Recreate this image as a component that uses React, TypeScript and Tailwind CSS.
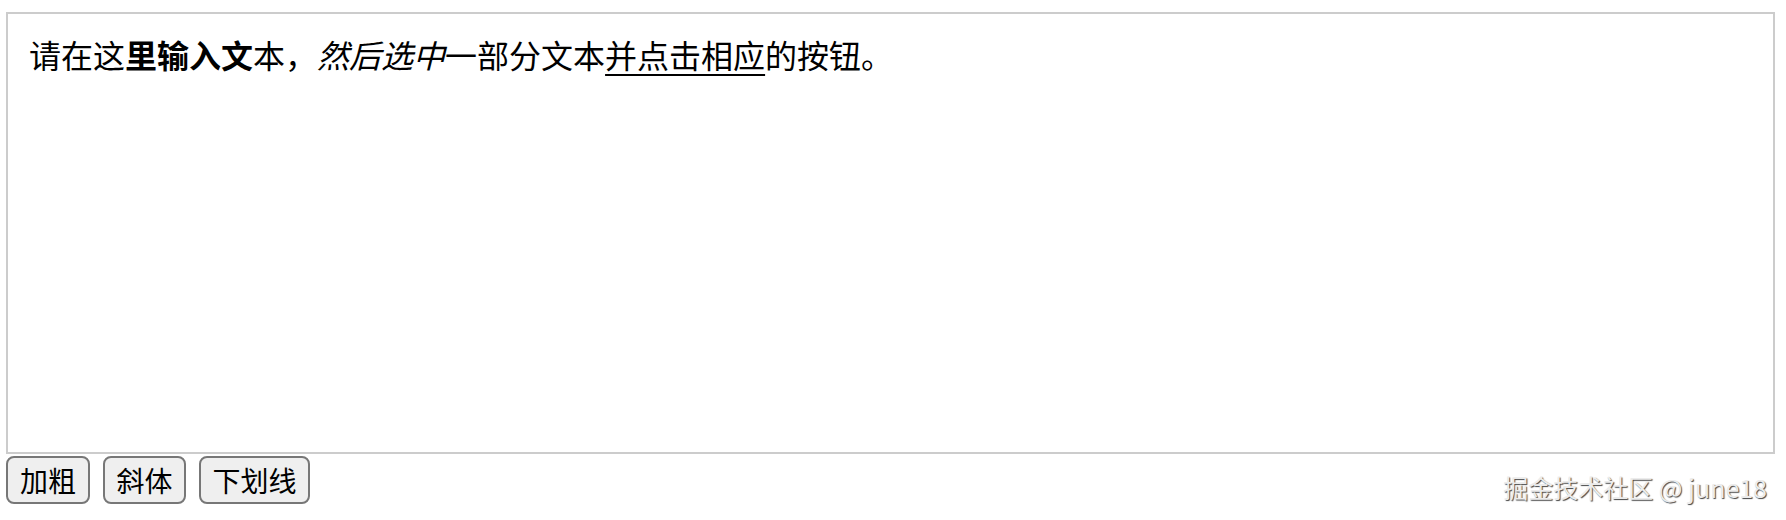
import React from "react";

export default function App() {
  const font = { fontFamily: '"Noto Sans CJK SC", "Noto Sans", sans-serif' };
  return (
    <div className="relative w-[1786px] h-[520px] bg-white overflow-hidden" style={font}>
      <div className="ml-[6px] mt-[12px] w-[1769px] h-[442px] border-2 border-[#cccccc] pl-[21px] pt-[17px] text-[32px] leading-[46px] text-black">
        请在这<b className="font-bold">里输入文</b>本，<i className="italic">然后选中</i>一部分文本
        <span className="underline decoration-2 underline-offset-[6px]">并点击相应</span>的按钮。
      </div>
      <div className="mt-[2px] ml-[6px] flex gap-[13px]">
        <button className="h-[48px] w-[84px] rounded-[8px] border-2 border-[#777777] bg-[#efefef] text-[28px] leading-none text-black">
          加粗
        </button>
        <button className="h-[48px] w-[83px] rounded-[8px] border-2 border-[#777777] bg-[#efefef] text-[28px] leading-none text-black">
          斜体
        </button>
        <button className="h-[48px] w-[111px] rounded-[8px] border-2 border-[#777777] bg-[#efefef] text-[28px] leading-none text-black">
          下划线
        </button>
      </div>
      <div className="absolute right-[19px] bottom-[20px] text-[25px] leading-none text-[#ececec] [text-shadow:1px_1px_1px_#444,-1px_-1px_0_#fff]">
        掘金技术社区 @ june18
      </div>
    </div>
  );
}
